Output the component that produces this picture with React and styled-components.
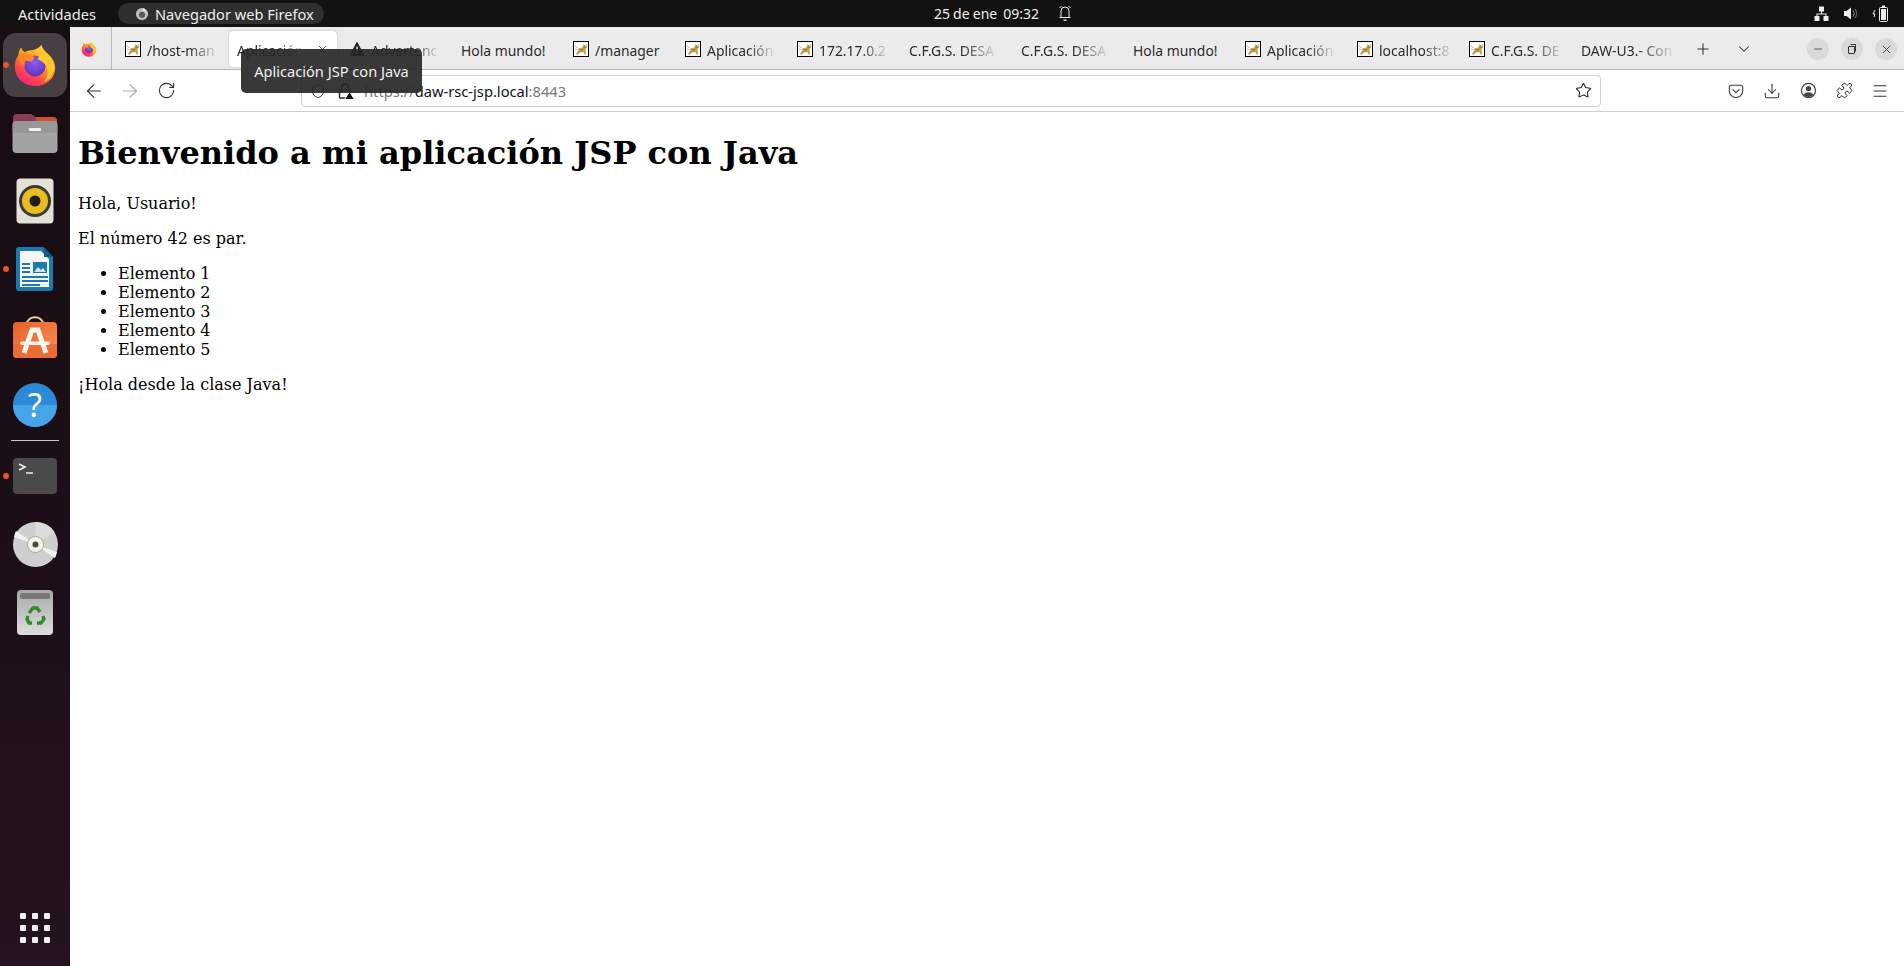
import React from "react";
import styled, { createGlobalStyle } from "styled-components";
import {
  ArrowLeft,
  ArrowRight,
  RotateCw,
  Shield,
  Star,
  Download,
  Puzzle,
  Menu,
  Plus,
  ChevronDown,
  X,
  Minus,
} from "lucide-react";

const GlobalStyle = createGlobalStyle`
  html, body {
    margin: 0;
    height: 100%;
    overflow: hidden;
    background: #fff;
  }
  #root {
    height: 100%;
  }
`;

const UI_FONT = `"Noto Sans", "Open Sans", sans-serif`;

const Desktop = styled.div`
  width: 1904px;
  height: 966px;
  display: flex;
  flex-direction: column;
  position: relative;
  font-family: ${UI_FONT};
`;

/* ---------- top bar ---------- */

const TopBar = styled.header`
  height: 27px;
  flex: none;
  background: #121212;
  color: #eee;
  font-size: 14.6px;
  display: grid;
  grid-template-columns: 1fr auto 1fr;
  align-items: center;
`;

const TopLeft = styled.div`
  display: flex;
  align-items: center;
`;

const Activities = styled.span`
  margin-left: 18px;
  width: 100px;
`;

const AppPill = styled.div`
  height: 21px;
  width: 206px;
  box-sizing: border-box;
  border-radius: 11px;
  background: #2f2f2f;
  display: flex;
  align-items: center;
  gap: 6px;
  padding-left: 17px;
`;

const Clock = styled.div`
  display: flex;
  align-items: center;
  gap: 6px;
  font-size: 14px;
  word-spacing: -0.5px;
  padding-left: 102px;
`;

const BellWrap = styled.span`
  margin-left: 13px;
  display: flex;
`;

const Tray = styled.div`
  display: flex;
  justify-content: flex-end;
  align-items: center;
  gap: 14px;
  padding-right: 15px;
`;

/* ---------- dock ---------- */

const Body = styled.div`
  flex: 1;
  display: flex;
  min-height: 0;
`;

const Dock = styled.nav`
  width: 70px;
  flex: none;
  background: linear-gradient(180deg, #170d13 0%, #1c0f17 55%, #241320 100%);
  padding-top: 4px;
  display: flex;
  flex-direction: column;
  align-items: center;
`;

const DockItem = styled.div`
  width: 70px;
  height: 68px;
  flex: none;
  display: flex;
  align-items: center;
  justify-content: center;
  position: relative;
`;

const DockTile = styled.div`
  width: 64px;
  height: 64px;
  border-radius: 13px;
  background: ${(p) => (p.$active ? "#463f43" : "transparent")};
  display: flex;
  align-items: center;
  justify-content: center;
`;

const RunDot = styled.span`
  position: absolute;
  left: 3px;
  top: 31px;
  width: 6px;
  height: 6px;
  border-radius: 50%;
  background: #e95420;
`;

const DockRule = styled.hr`
  width: 48px;
  height: 1px;
  border: 0;
  background: #c8c4c6;
  margin: 1px 0 1px;
  flex: none;
`;

const AppGrid = styled.div`
  margin-top: auto;
  margin-bottom: 23px;
  display: grid;
  grid-template-columns: repeat(3, 6px);
  grid-auto-rows: 6px;
  gap: 6px;
`;

const GridDot = styled.span`
  background: #f2f0f0;
  border-radius: 1px;
`;

/* ---------- browser ---------- */

const Browser = styled.main`
  flex: 1;
  min-width: 0;
  display: flex;
  flex-direction: column;
  background: #fff;
`;

const TabBar = styled.div`
  height: 43px;
  flex: none;
  box-sizing: border-box;
  background: #ebebeb;
  border-bottom: 1px solid #b4b4b4;
  display: flex;
  align-items: center;
  color: #2b2b2b;
  font-size: 13.9px;
`;

const PinnedTab = styled.div`
  width: 42px;
  height: 42px;
  margin-right: 3px;
  padding: 2px 4px 0 0;
  box-sizing: border-box;
  border-right: 1px solid #b8b8b8;
  display: flex;
  align-items: center;
  justify-content: center;
`;

const TabSlot = styled.div`
  width: 112px;
  flex: none;
  height: 36px;
  margin-top: 2px;
  box-sizing: border-box;
  padding: 0 2px;
`;

const TabBody = styled.div`
  height: 36px;
  box-sizing: border-box;
  border-radius: 4px;
  padding: 0 8px;
  display: flex;
  align-items: center;
  gap: 6px;
  background: ${(p) => (p.$active ? "#fff" : "transparent")};
  box-shadow: ${(p) => (p.$active ? "0 0 2px rgba(0,0,0,.25)" : "none")};
`;

const TabTitle = styled.span`
  flex: 1;
  min-width: 0;
  padding-top: 2px;
  white-space: nowrap;
`;

const FadedText = styled.span`
  display: inline-block;
  -webkit-mask-image: linear-gradient(90deg, #000 62%, rgba(0, 0, 0, 0.12) 100%);
  mask-image: linear-gradient(90deg, #000 62%, rgba(0, 0, 0, 0.12) 100%);
`;

const TabButton = styled.div`
  display: flex;
  align-items: center;
  justify-content: center;
  flex: none;
  margin-top: 2px;
  width: ${(p) => p.$w}px;
  color: #333;
`;

const WindowButtons = styled.div`
  margin: 2px 0 0 auto;
  display: flex;
  gap: 12px;
  padding-right: 7px;
`;

const WindowButton = styled.div`
  width: 22px;
  height: 22px;
  border-radius: 50%;
  background: #dadada;
  color: #333;
  display: flex;
  align-items: center;
  justify-content: center;
`;

const NavBar = styled.div`
  height: 42px;
  flex: none;
  box-sizing: border-box;
  border-bottom: 1px solid #cfcfd1;
  background: #fff;
  display: flex;
  align-items: center;
`;

const NavButton = styled.div`
  width: 36px;
  display: flex;
  justify-content: center;
  align-items: center;
  color: ${(p) => (p.$off ? "#a8a8a8" : "#333")};
`;

const NavLeft = styled.div`
  margin-left: 6px;
  display: flex;
`;

const UrlBar = styled.div`
  margin-left: 117px;
  width: 1300px;
  height: 32px;
  box-sizing: border-box;
  border: 1px solid #cfcfcf;
  border-radius: 4px;
  background: #fff;
  display: flex;
  align-items: center;
  padding: 0 8px;
  font-size: 14.7px;
  color: #777;
`;

const UrlIcons = styled.div`
  display: flex;
  align-items: center;
  gap: 11px;
  width: 54px;
  flex: none;
  color: #222;
`;

const UrlText = styled.span`
  flex: 1;
`;

const UrlHost = styled.span`
  color: #111;
`;

const NavRight = styled.div`
  margin-left: 117px;
  display: flex;
`;

const Tooltip = styled.div`
  position: absolute;
  left: 241px;
  top: 49px;
  width: 181px;
  height: 44px;
  box-sizing: border-box;
  border-radius: 5px;
  background: rgba(40, 40, 40, 0.92);
  color: #f2f2f2;
  font-size: 14.6px;
  display: flex;
  align-items: center;
  justify-content: center;
`;

/* ---------- page ---------- */

const Page = styled.article`
  flex: 1;
  padding: 22px 8px 8px;
  font-family: "DejaVu Serif", serif;
  font-size: 16px;
  color: #000;
`;

const Title = styled.h1`
  font-size: 32px;
  font-weight: bold;
  margin: 0 0 22.44px;
`;

const Para = styled.p`
  margin: 16px 0;
`;

const List = styled.ul`
  margin: 16px 0;
  padding-left: 40px;
`;

/* ---------- icons ---------- */

const FirefoxIcon = ({ size = 44, id = "ff" }) => (
  <svg width={size} height={size} viewBox="0 0 48 48">
    <defs>
      <linearGradient id={`${id}Body`} x1="0.8" y1="0.05" x2="0.2" y2="1">
        <stop offset="0" stopColor="#ffe03a" />
        <stop offset="0.4" stopColor="#ff9a1f" />
        <stop offset="0.75" stopColor="#ff3f4f" />
        <stop offset="1" stopColor="#e3208f" />
      </linearGradient>
      <radialGradient id={`${id}Core`} cx="0.5" cy="0.35" r="0.7">
        <stop offset="0" stopColor="#8f5cf0" />
        <stop offset="1" stopColor="#5a30c0" />
      </radialGradient>
    </defs>
    <path
      d="M31 2c1 5 4 7 7 10 5 4 8 10 8 15 0 12-10 20-22 20S2 38 2 26c0-5 1-9 4-13 0-3 1-6 3-8 1 3 2 4 4 5 3-2 6-2 8-2 4-1 8-3 10-6z"
      fill={`url(#${id}Body)`}
    />
    <circle cx="24" cy="25" r="11.5" fill={`url(#${id}Core)`} />
    <path
      d="M6 14c3-2 6-3 10-2 3 1 5 3 8 3l-3 5c-4 1-8-1-10-3-1 3 0 6 2 8-4-2-7-6-7-11z"
      fill="#ff8a24"
    />
    <path
      d="M31 2c1 5 5 8 8 11 4 4 6 9 6 14-1 8-6 14-12 16 5-5 6-12 3-18-2-4-6-6-9-7 2-5 3-10 4-16z"
      fill="#ffc72e"
    />
  </svg>
);

const TomcatIcon = () => (
  <svg width="16" height="16" viewBox="0 0 16 16" style={{ flex: "none" }}>
    <rect x="0.5" y="0.5" width="15" height="15" fill="#fff" stroke="#000" />
    <path
      d="M2.500 13.500L5 10 5.500 7.500 9.500 6.500 10.500 3l1 1.200h1.300L13.500 3l.5 3.500-1.500 1.500.5 5.500h-1.500L10.500 11 7.500 11.500 5 13.500z"
      fill="#c69c4e"
    />
    <path d="M7 8.500l3 .5M10.500 6l2 .5" stroke="#7d5f28" strokeWidth="0.7" />
    <path d="M2 5l2.500 2M2 8l2 .8" stroke="#9a9a9a" strokeWidth="0.8" />
  </svg>
);

const WarningIcon = () => (
  <svg width="16" height="16" viewBox="0 0 16 16" style={{ flex: "none" }}>
    <path d="M8 1.500l7 13H1z" fill="#1d1d1d" stroke="#1d1d1d" strokeLinejoin="round" />
    <rect x="7.300" y="5.500" width="1.400" height="5" fill="#ebebeb" />
    <rect x="7.300" y="11.300" width="1.400" height="1.500" fill="#ebebeb" />
  </svg>
);

const FilesIcon = () => (
  <svg width="46" height="42" viewBox="0 0 46 42">
    <path d="M1 6a4 4 0 0 1 4-4h14l5 3h17a4 4 0 0 1 4 4v10H1z" fill="#8b3a58" />
    <path d="M24 5h17a4 4 0 0 1 4 4v6H24z" fill="#c8552f" />
    <rect x="0.5" y="9" width="45" height="32" rx="4" fill="#a3a3a3" />
    <rect x="0.5" y="9" width="45" height="12" rx="4" fill="#8d8d8d" opacity="0.5" />
    <rect x="17" y="16" width="12" height="3" rx="1" fill="#f3f3f3" />
  </svg>
);

const RhythmboxIcon = () => (
  <svg width="38" height="46" viewBox="0 0 38 46">
    <rect x="0.5" y="0.5" width="37" height="45" rx="4" fill="#e6e1d6" />
    <circle cx="19" cy="23" r="16" fill="#3b3a38" />
    <circle cx="19" cy="23" r="13" fill="#eabd1f" />
    <circle cx="19" cy="23" r="5.500" fill="#1f1e1c" />
  </svg>
);

const WriterIcon = () => (
  <svg width="38" height="46" viewBox="0 0 38 46">
    <path d="M3 1h24l10 10v31a3 3 0 0 1-3 3H3a3 3 0 0 1-3-3V4a3 3 0 0 1 3-3z" fill="#1c79ad" />
    <path d="M4 5h21l8 8v28H4z" fill="#f4f6f8" />
    <path d="M28 1l9 10h-9z" fill="#0f5c88" />
    <rect x="6" y="17" width="8" height="2" fill="#1c79ad" />
    <rect x="6" y="21" width="8" height="2" fill="#1c79ad" />
    <rect x="6" y="25" width="8" height="2" fill="#1c79ad" />
    <rect x="17" y="16" width="14" height="11" fill="#1c79ad" />
    <path d="M18 26l4-5 3 3 2-2 3 4z" fill="#cfe3ef" />
    <rect x="6" y="30" width="26" height="2" fill="#1c79ad" />
    <rect x="6" y="34" width="26" height="2" fill="#1c79ad" />
    <rect x="6" y="38" width="18" height="2" fill="#1c79ad" />
  </svg>
);

const SoftwareIcon = () => (
  <svg width="44" height="42" viewBox="0 0 44 42">
    <defs>
      <linearGradient id="swBag" x1="0" y1="0" x2="1" y2="1">
        <stop offset="0" stopColor="#e85f28" />
        <stop offset="1" stopColor="#f8925a" />
      </linearGradient>
    </defs>
    <path d="M14 8c0-9 16-9 16 0" fill="none" stroke="#e8cfa8" strokeWidth="2" />
    <rect x="0" y="6" width="44" height="36" rx="4" fill="url(#swBag)" />
    <path d="M0 28h44v10a4 4 0 0 1-4 4H4a4 4 0 0 1-4-4z" fill="#ea6b33" />
    <path d="M11 37l8-23h6l8 23" fill="none" stroke="#fdf4ec" strokeWidth="5" />
    <rect x="7" y="25.500" width="30" height="3.500" rx="1.700" fill="#fdf4ec" />
  </svg>
);

const HelpIcon = () => (
  <svg width="44" height="44" viewBox="0 0 44 44">
    <circle cx="22" cy="22" r="22" fill="#2a8ad8" />
    <path d="M0 22a22 22 0 0 0 44 0z" fill="#45a5e6" />
    <text
      x="22"
      y="34"
      textAnchor="middle"
      fontSize="32"
      fontFamily="Noto Sans, sans-serif"
      fill="#fff"
    >
      ?
    </text>
  </svg>
);

const TerminalIcon = () => (
  <svg width="44" height="36" viewBox="0 0 44 36">
    <rect x="0" y="0" width="44" height="36" rx="4" fill="#4a4a4a" />
    <path d="M6 6l6 3-6 3" fill="none" stroke="#f2f2f2" strokeWidth="1.500" />
    <path d="M13 15h7" stroke="#f2f2f2" strokeWidth="1.500" />
  </svg>
);

const DiscIcon = () => (
  <svg width="45" height="45" viewBox="0 0 45 45">
    <circle cx="22.500" cy="22.500" r="22.500" fill="#cfcfcf" />
    <path d="M22.500 22.500L3 9A22.500 22.500 0 0 0 1 15z" fill="#f2f2f2" />
    <path d="M22.500 22.500L42 36a22.500 22.500 0 0 0 2-6z" fill="#f2f2f2" />
    <path d="M22.500 22.500L22.500 0a22.500 22.500 0 0 1 19 10z" fill="#dcdcdc" />
    <circle cx="22.500" cy="22.500" r="8" fill="#f5f3ee" stroke="#b0a68e" />
    <circle cx="22.500" cy="22.500" r="3" fill="#4a4a4a" />
  </svg>
);

const TrashIcon = () => (
  <svg width="36" height="45" viewBox="0 0 36 45">
    <defs>
      <linearGradient id="trashBody" x1="0" y1="0" x2="0" y2="1">
        <stop offset="0" stopColor="#a8a8a8" />
        <stop offset="1" stopColor="#dedede" />
      </linearGradient>
    </defs>
    <rect x="0" y="0" width="36" height="45" rx="4" fill="url(#trashBody)" />
    <rect x="3" y="3" width="30" height="6" rx="2" fill="#777" />
    <g fill="none" stroke="#2f8a2c" strokeWidth="3.400">
      <path d="M12 23l4-5h4l3 4" />
      <path d="M26 26l1 3-3 4h-4" />
      <path d="M15 33h-3l-2-4 1-3" />
    </g>
  </svg>
);

const BellIcon = () => (
  <svg width="14" height="17" viewBox="0 0 14 17" fill="none" stroke="#eee" strokeWidth="1">
    <path d="M3 12V6a4 4 0 0 1 8 0v6M1.500 12.500h11M1.500 3L3.500 1M12.500 3l-2-2" />
    <rect x="5.500" y="14.500" width="3" height="1.400" fill="#eee" stroke="none" />
  </svg>
);

const NetworkIcon = () => (
  <svg width="15" height="15" viewBox="0 0 15 15" fill="#eee">
    <rect x="5" y="0.500" width="5" height="5" rx="0.500" />
    <rect x="0.500" y="10" width="5" height="5" rx="0.500" />
    <rect x="9.500" y="10" width="5" height="5" rx="0.500" />
    <path d="M7 5h1v2.500h4.500V10h-1V8.500h-8V10h-1V7.500H7z" />
  </svg>
);

const SpeakerIcon = () => (
  <svg width="15" height="15" viewBox="0 0 15 15">
    <path d="M1 5h2.500L8 1.500v12L3.500 10H1z" fill="#eee" />
    <path d="M10 4.500c1.500 1.500 1.500 4.500 0 6" fill="none" stroke="#999" />
    <path d="M12 3c2 2.500 2 6.500 0 9" fill="none" stroke="#777" />
  </svg>
);

const BatteryIcon = () => (
  <svg width="17" height="17" viewBox="0 0 17 17">
    <path d="M3 5L1 9h2l-1 3" fill="none" stroke="#eee" />
    <rect x="7.500" y="2.500" width="8" height="14" rx="1" fill="none" stroke="#eee" />
    <rect x="10" y="0.500" width="3" height="2" fill="#eee" />
    <rect x="9" y="4" width="5" height="11" fill="#eee" />
  </svg>
);

const LockWarnIcon = () => (
  <svg width="18" height="18" viewBox="0 0 18 18" fill="none" stroke="#222" strokeWidth="1.400">
    <rect x="2.500" y="8" width="11" height="8" rx="1" />
    <path d="M5 8V5a3 3 0 0 1 6 0v3" />
    <path d="M12.500 9.500l5 8h-10z" fill="#111" stroke="#fff" strokeWidth="1" />
  </svg>
);

const PocketIcon = () => (
  <svg width="16" height="16" viewBox="0 0 18 18" fill="none" stroke="#444" strokeWidth="1.300">
    <path d="M3.500 2.500h11a2 2 0 0 1 2 2V9a7.500 7.500 0 0 1-15 0V4.500a2 2 0 0 1 2-2z" />
    <path d="M5.500 7.500L9 11l3.500-3.500" strokeLinecap="round" />
  </svg>
);

const ProfileIcon = () => (
  <svg width="17" height="17" viewBox="0 0 18 18">
    <circle cx="9" cy="9" r="7.500" fill="none" stroke="#444" strokeWidth="1.300" />
    <circle cx="9" cy="7" r="2.800" fill="#444" />
    <path d="M3.800 13.500c2-3.500 8.400-3.500 10.400 0A7 7 0 0 1 3.800 13.500z" fill="#444" />
  </svg>
);

const FirefoxGrey = () => (
  <svg width="14" height="14" viewBox="0 0 16 16">
    <circle cx="8" cy="8" r="7" fill="#bdbdbd" />
    <circle cx="8" cy="9" r="3.500" fill="#5a5a5a" />
    <path d="M10 1c1 2 4 3 4 7-1-2-3-4-6-4z" fill="#e5e5e5" />
  </svg>
);

const RestoreIcon = () => (
  <svg width="12" height="12" viewBox="0 0 12 12" fill="none" stroke="#333">
    <rect x="2.500" y="3.500" width="6" height="7" rx="0.500" />
    <path d="M4.500 1.500h5v7" />
  </svg>
);

const TABS = [
  { title: "/host-man", icon: "cat", fade: true },
  { title: "Aplicación", active: true, fade: true },
  { title: "Advertenc", icon: "warn", fade: true },
  { title: "Hola mundo!" },
  { title: "/manager", icon: "cat" },
  { title: "Aplicación", icon: "cat", fade: true },
  { title: "172.17.0.2", icon: "cat", fade: true },
  { title: "C.F.G.S. DESA", fade: true },
  { title: "C.F.G.S. DESA", fade: true },
  { title: "Hola mundo!" },
  { title: "Aplicación", icon: "cat", fade: true },
  { title: "localhost:8", icon: "cat", fade: true },
  { title: "C.F.G.S. DE", icon: "cat", fade: true },
  { title: "DAW-U3.- Con", fade: true },
];

const DOCK = [
  { key: "firefox", el: <FirefoxIcon />, active: true, running: true },
  { key: "files", el: <FilesIcon /> },
  { key: "rhythmbox", el: <RhythmboxIcon /> },
  { key: "writer", el: <WriterIcon />, running: true },
  { key: "software", el: <SoftwareIcon /> },
  { key: "help", el: <HelpIcon /> },
];

const DOCK_LOWER = [
  { key: "terminal", el: <TerminalIcon />, running: true },
  { key: "disc", el: <DiscIcon /> },
  { key: "trash", el: <TrashIcon /> },
];

const renderDockItem = (item) => (
  <DockItem key={item.key}>
    {item.running && <RunDot />}
    <DockTile $active={item.active}>{item.el}</DockTile>
  </DockItem>
);

const App = () => {
  return (
    <>
      <GlobalStyle />
      <Desktop>
        <TopBar>
          <TopLeft>
            <Activities>Actividades</Activities>
            <AppPill>
              <FirefoxGrey />
              Navegador web Firefox
            </AppPill>
          </TopLeft>
          <Clock>
            <span>25 de ene</span>
            <span>09:32</span>
            <BellWrap>
              <BellIcon />
            </BellWrap>
          </Clock>
          <Tray>
            <NetworkIcon />
            <SpeakerIcon />
            <BatteryIcon />
          </Tray>
        </TopBar>
        <Body>
          <Dock>
            {DOCK.map(renderDockItem)}
            <DockRule />
            {DOCK_LOWER.map(renderDockItem)}
            <AppGrid>
              {Array.from({ length: 9 }).map((_, i) => (
                <GridDot key={i} />
              ))}
            </AppGrid>
          </Dock>
          <Browser>
            <TabBar>
              <PinnedTab>
                <FirefoxIcon size={16} id="ffSmall" />
              </PinnedTab>
              {TABS.map((tab, i) => (
                <TabSlot key={i}>
                  <TabBody $active={tab.active}>
                    {tab.icon === "cat" && <TomcatIcon />}
                    {tab.icon === "warn" && <WarningIcon />}
                    <TabTitle>
                      {tab.fade ? <FadedText>{tab.title}</FadedText> : tab.title}
                    </TabTitle>
                    {tab.active && <X size={13} strokeWidth={1.5} color="#333" />}
                  </TabBody>
                </TabSlot>
              ))}
              <TabButton $w={40}>
                <Plus size={18} strokeWidth={1.4} />
              </TabButton>
              <TabButton $w={42}>
                <ChevronDown size={18} strokeWidth={1.4} />
              </TabButton>
              <WindowButtons>
                <WindowButton>
                  <Minus size={12} strokeWidth={1.5} />
                </WindowButton>
                <WindowButton>
                  <RestoreIcon />
                </WindowButton>
                <WindowButton>
                  <X size={13} strokeWidth={1.5} />
                </WindowButton>
              </WindowButtons>
            </TabBar>
            <NavBar>
              <NavLeft>
                <NavButton>
                  <ArrowLeft size={22} strokeWidth={1.2} />
                </NavButton>
                <NavButton $off>
                  <ArrowRight size={22} strokeWidth={1.2} />
                </NavButton>
                <NavButton>
                  <RotateCw size={19} strokeWidth={1.4} />
                </NavButton>
              </NavLeft>
              <UrlBar>
                <UrlIcons>
                  <Shield size={16} strokeWidth={1.4} />
                  <LockWarnIcon />
                </UrlIcons>
                <UrlText>
                  https://<UrlHost>daw-rsc-jsp.local</UrlHost>:8443
                </UrlText>
                <Star size={17} strokeWidth={1.5} color="#222" />
              </UrlBar>
              <NavRight>
                <NavButton>
                  <PocketIcon />
                </NavButton>
                <NavButton>
                  <Download size={18} strokeWidth={1.4} />
                </NavButton>
                <NavButton>
                  <ProfileIcon />
                </NavButton>
                <NavButton>
                  <Puzzle size={17} strokeWidth={1.4} />
                </NavButton>
                <NavButton>
                  <Menu size={18} strokeWidth={1.4} />
                </NavButton>
              </NavRight>
            </NavBar>
            <Page>
              <Title>Bienvenido a mi aplicación JSP con Java</Title>
              <Para>Hola, Usuario!</Para>
              <Para>El número 42 es par.</Para>
              <List>
                <li>Elemento 1</li>
                <li>Elemento 2</li>
                <li>Elemento 3</li>
                <li>Elemento 4</li>
                <li>Elemento 5</li>
              </List>
              <Para>¡Hola desde la clase Java!</Para>
            </Page>
          </Browser>
        </Body>
        <Tooltip>Aplicación JSP con Java</Tooltip>
      </Desktop>
    </>
  );
};

export default App;
